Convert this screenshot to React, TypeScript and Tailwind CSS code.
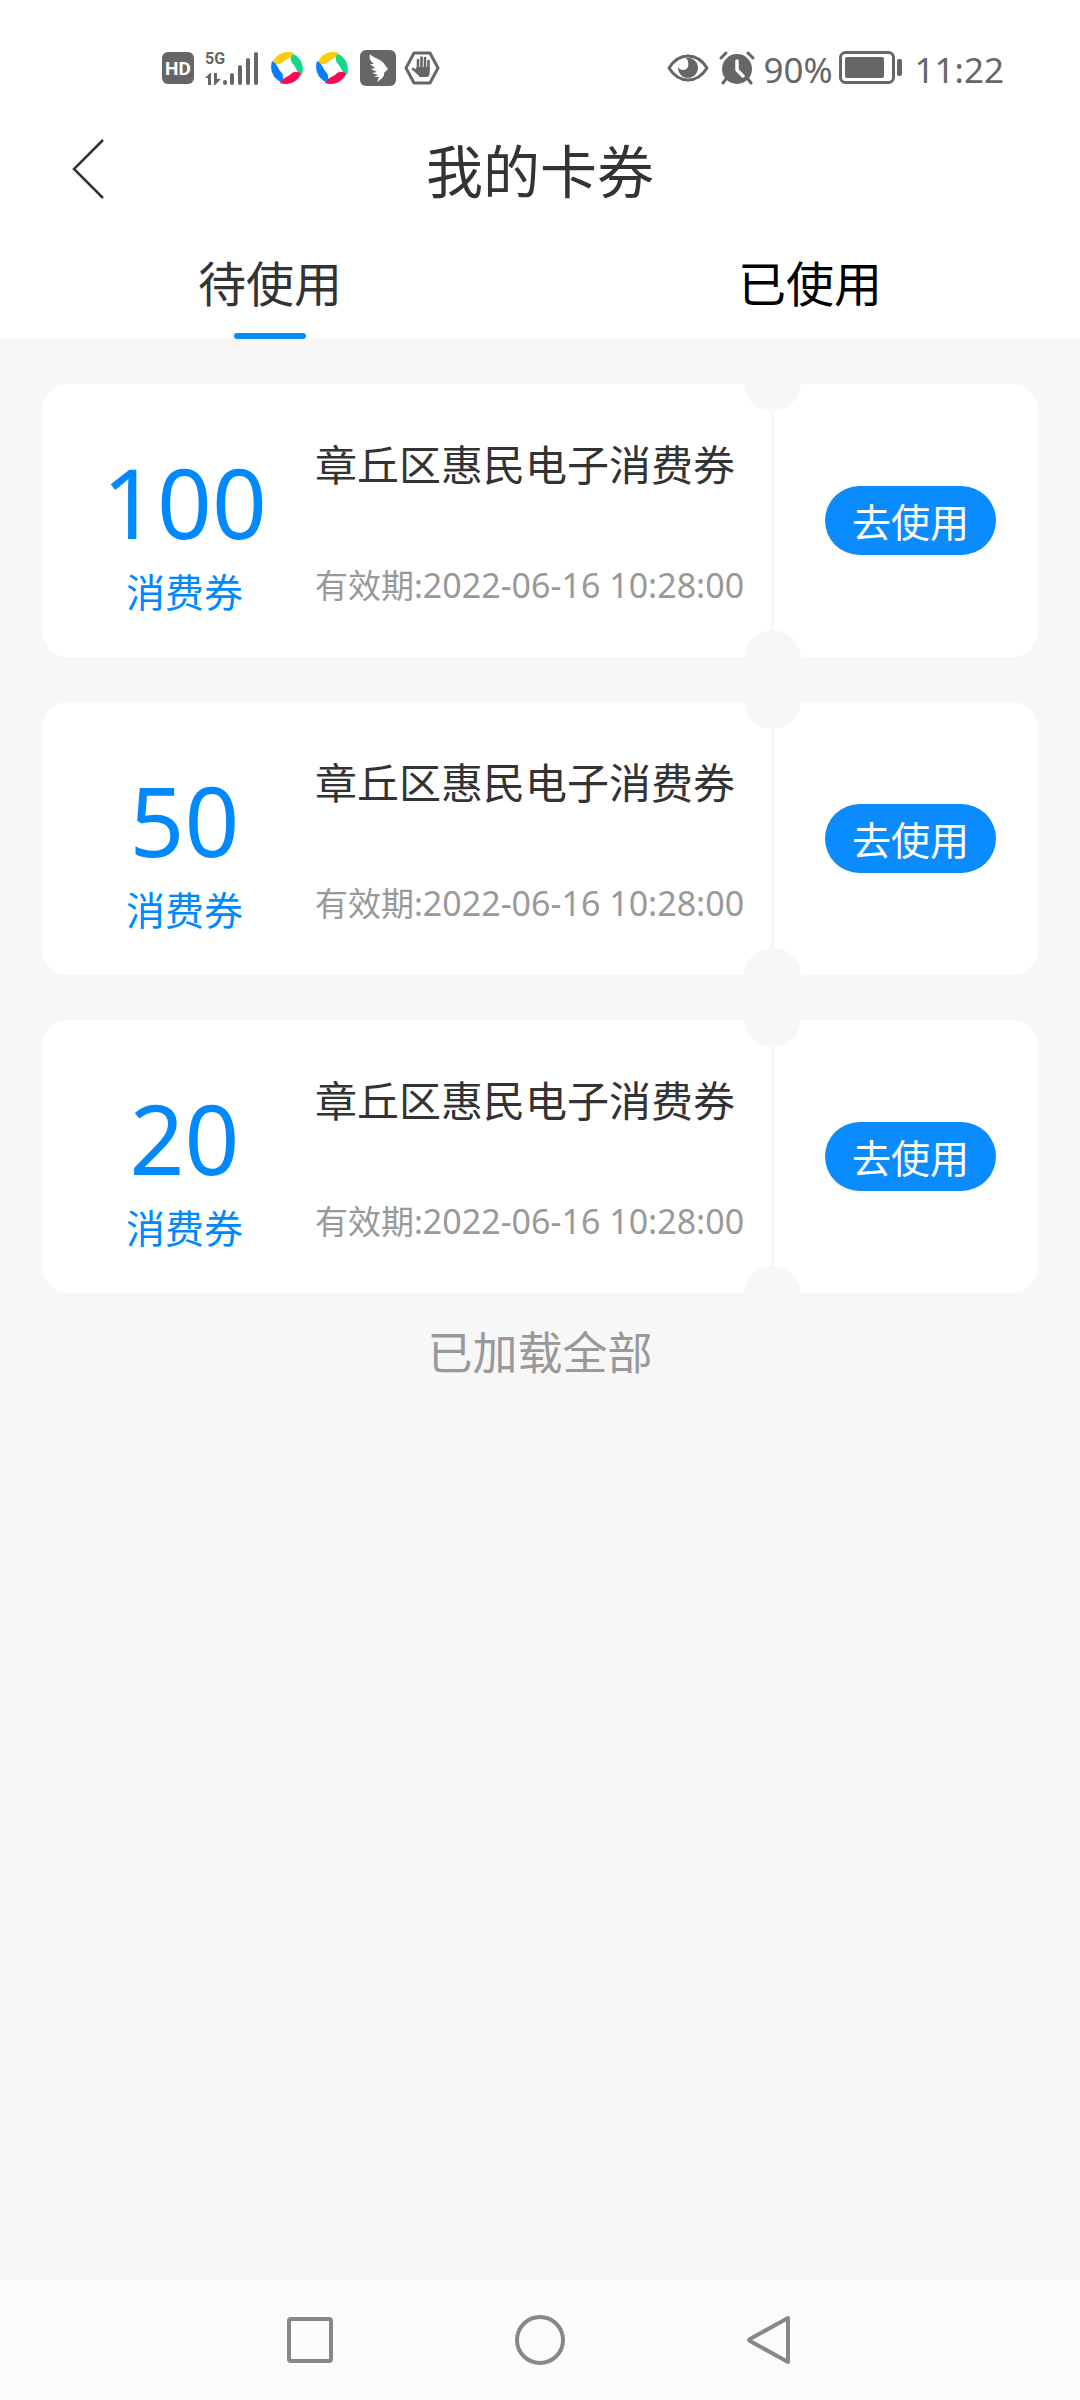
import { useState } from "react";

const COUPONS = [
  { id: 1, amount: 100, title: "章丘区惠民电子消费券", expires: "2022-06-16 10:28:00" },
  { id: 2, amount: 50, title: "章丘区惠民电子消费券", expires: "2022-06-16 10:28:00" },
  { id: 3, amount: 20, title: "章丘区惠民电子消费券", expires: "2022-06-16 10:28:00" },
];

const TABS = [
  { key: "unused", label: "待使用" },
  { key: "used", label: "已使用" },
];

const PETAL = "M3 11C6 4 14-1 24 2 22 7 16 8 13 11 10 14 5 14 3 11Z";

function PinwheelIcon() {
  return (
    <svg width="34" height="34" viewBox="0 0 34 34">
      <path d={PETAL} fill="#fccb0a" />
      <path d={PETAL} fill="#14d98c" transform="rotate(90 17 17)" />
      <path d={PETAL} fill="#fb0755" transform="rotate(180 17 17)" />
      <path d={PETAL} fill="#0a7cff" transform="rotate(270 17 17)" />
    </svg>
  );
}

function StatusBar() {
  return (
    <div className="flex h-[136px] items-center justify-between pl-[162px] pr-[76px] text-[#666]">
      <div className="flex items-center gap-[11px]">
        <span className="flex h-8 w-8 items-center justify-center rounded-md bg-[#666] font-[Roboto,sans-serif] text-[19px] leading-none font-bold text-white">
          HD
        </span>

        {/* Mobile signal */}
        <div className="relative h-[34px] w-[54px]">
          <span className="absolute top-0 left-0 font-[Roboto,sans-serif] text-[16px] leading-4 font-bold">5G</span>
          <svg width="54" height="34" viewBox="0 0 54 34" fill="currentColor">
            <path d="M0 27l5-5h1v12H3v-7H0ZM9 22h3v6h4l-6 6H9V22Z" />
            <rect x="18" y="29" width="4" height="5" rx="2" />
            <rect x="25" y="22" width="4" height="12" rx="2" />
            <rect x="33" y="14" width="4" height="20" rx="2" />
            <rect x="41" y="7" width="4" height="27" rx="2" />
            <rect x="49" y="1" width="4" height="33" rx="2" />
          </svg>
        </div>

        <PinwheelIcon />
        <PinwheelIcon />

        <div className="flex items-center gap-2">
          <svg width="36" height="36" viewBox="0 0 36 36">
            <rect width="36" height="36" rx="6" fill="#666" />
            <path
              d="M10 4C13 8 22 9 25 15L28 19 24 23C25 27 20 30 17 32L19 27 14 27 18 25 12 23 17 22 11 19 15 18 10 14 14 14C10 11 9 8 10 4Z"
              fill="#fff"
            />
          </svg>
          <svg width="36" height="36" viewBox="0 0 36 36">
            <path d="M10 3h16l8 15-8 15H10L2 18Z" fill="none" stroke="#666" strokeWidth="3" strokeLinejoin="round" />
            <g fill="none" stroke="#666" strokeWidth="2.6" strokeLinecap="round">
              <path d="M14 20V10M17.500 18V7.500M21 18V8M24.500 20V11M14 23l-5-4" />
            </g>
            <path d="M12.700 17h13v6c0 2-1 3-2 4h-8l-5-6Z" fill="#666" />
          </svg>
        </div>
      </div>

      <div className="flex items-center">
        <svg width="42" height="30" viewBox="0 0 42 30">
          <path d="M2 15C12-1 30-1 40 15 30 31 12 31 2 15Z" fill="none" stroke="#666" strokeWidth="3" strokeLinejoin="round" />
          <path d="M19 5a10 10 0 1 1-8 9c2 4 8 4 10 0 1-4 0-7-2-9Z" fill="#666" />
        </svg>
        <svg className="ml-2.5" width="36" height="34" viewBox="0 0 36 34">
          <circle cx="18" cy="18" r="15" fill="#666" />
          <path d="M2 7l5-5M34 7l-5-5M7 28l-3 4M29 28l3 4" stroke="#666" strokeWidth="3" strokeLinecap="round" />
          <path d="M18 10v9l6 6" fill="none" stroke="#fff" strokeWidth="3.500" strokeLinecap="round" strokeLinejoin="round" />
        </svg>
        <span className="mt-1 ml-2 text-[35px] leading-10">90%</span>
        <svg className="ml-1.5" width="64" height="34" viewBox="0 0 64 34">
          <rect x="1.500" y="1.500" width="53" height="30" rx="5" fill="none" stroke="#666" strokeWidth="3" />
          <rect x="6" y="6" width="39" height="21" rx="2" fill="#666" />
          <rect x="58" y="8" width="5" height="17" rx="2" fill="#666" />
        </svg>
        <span className="mt-1 ml-3 text-[35px] leading-10">11:22</span>
      </div>
    </div>
  );
}

function CouponCard({ coupon }: { coupon: (typeof COUPONS)[number] }) {
  return (
    <li className="relative flex h-[273px] overflow-hidden rounded-[26px] bg-white">
      <div className="flex flex-1 pl-[21px]">
        <div className="flex w-[243px] flex-col items-center pt-[70px] text-[#0089ff]">
          <span className="text-[96px] leading-[96px]">{coupon.amount}</span>
          <span className="mt-[15px] text-[39px] leading-[54px]">消费券</span>
        </div>
        <div className="flex flex-col justify-between pt-[51px] pb-[47px] pl-[9px] whitespace-nowrap">
          <h2 className="text-[42px] leading-[60px] text-[#333]">{coupon.title}</h2>
          <p className="text-[33px] leading-[48px] text-[#999]">
            有效期:<time className="text-[34px]">{coupon.expires}</time>
          </p>
        </div>
      </div>

      <div className="flex w-[267px] items-center justify-end border-l-3 border-[#f7f7f7] pr-[42px]">
        <button className="h-[69px] w-[171px] rounded-full bg-[#0a8cff] pt-0.5 text-[39px] leading-[54px] text-white">
          去使用
        </button>
      </div>

      {/* Ticket notches */}
      <span className="absolute -top-[30px] right-[237px] h-[57px] w-[57px] rounded-full bg-[#f7f7f7]" />
      <span className="absolute right-[237px] -bottom-[30px] h-[57px] w-[57px] rounded-full bg-[#f7f7f7]" />
    </li>
  );
}

export default function App() {
  const [tab, setTab] = useState("unused");

  return (
    <div className="flex min-h-screen flex-col bg-[#f7f7f7] font-['Noto_Sans','Noto_Sans_CJK_SC',sans-serif]">
      <header className="bg-white">
        <StatusBar />

        <div className="grid h-[70px] grid-cols-[1fr_auto_1fr] items-center">
          <button aria-label="返回" className="justify-self-start pb-1 pl-[72px]">
            <svg width="32" height="60" viewBox="0 0 32 60" fill="none" stroke="#333" strokeWidth="2.500">
              <path d="M31 1L2 30l29 29" />
            </svg>
          </button>
          <h1 className="text-[57px] leading-[70px] text-[#333]">我的卡券</h1>
        </div>

        <div role="tablist" className="flex h-[133px]">
          {TABS.map((t) => (
            <button
              key={t.key}
              role="tab"
              aria-selected={tab === t.key}
              onClick={() => setTab(t.key)}
              className={`flex flex-1 flex-col items-center justify-end gap-[21px] text-[48px] leading-[56px] ${tab === t.key ? "text-[#333]" : "text-black"}`}
            >
              {t.label}
              <span className={`h-1.5 w-[72px] rounded-full ${tab === t.key ? "bg-[#0a8cf0]" : "bg-transparent"}`} />
            </button>
          ))}
        </div>
      </header>

      <main className="flex-1 px-[42px] pt-[45px]">
        <ul className="flex flex-col gap-[45px]">
          {COUPONS.map((coupon) => (
            <CouponCard key={coupon.id} coupon={coupon} />
          ))}
        </ul>
        <p className="mt-[30px] text-center text-[45px] leading-[60px] text-[#999]">已加载全部</p>
      </main>

      <nav className="flex h-[120px] items-center justify-center gap-[180px] bg-[#fcfcfc]">
        <button aria-label="最近任务">
          <svg width="50" height="50" viewBox="0 0 50 50" fill="none" stroke="#888" strokeWidth="4">
            <rect x="4" y="4" width="42" height="42" rx="2" />
          </svg>
        </button>
        <button aria-label="主屏幕">
          <svg width="50" height="50" viewBox="0 0 50 50" fill="none" stroke="#888" strokeWidth="4">
            <circle cx="25" cy="25" r="23" />
          </svg>
        </button>
        <button aria-label="返回上一页">
          <svg width="50" height="50" viewBox="0 0 50 50" fill="none" stroke="#888" strokeWidth="4" strokeLinejoin="round">
            <path d="M43 3v44L5 26q-2-1 0-2Z" />
          </svg>
        </button>
      </nav>
    </div>
  );
}
